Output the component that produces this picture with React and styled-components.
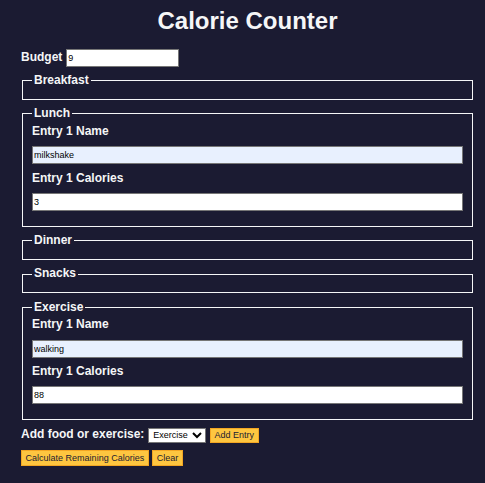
import styled, { createGlobalStyle } from "styled-components";

const GlobalStyle = createGlobalStyle`
  body {
    margin: 0;
    background-color: #1b1b32;
    color: #f5f6f7;
    font-family: "Liberation Sans", Arial, sans-serif;
  }
`;

const Container = styled.main`
  width: 455px;
  margin-left: 20px;
`;

const Title = styled.h1`
  margin: 7px 0 0;
  font-size: 24px;
  font-weight: bold;
  line-height: 1.15;
  text-align: center;
`;

const Form = styled.form`
  margin-top: 14px;
`;

const Label = styled.label`
  font-size: 12px;
  font-weight: bold;
  line-height: 1.15;
`;

const BudgetRow = styled.div`
  display: flex;
  align-items: center;
  gap: 4px;
  padding-left: 1px;
`;

const TextInput = styled.input`
  box-sizing: border-box;
  height: 18px;
  padding: 0 1px;
  border: 1px solid #767676;
  border-radius: 0;
  background: ${({ $autofill }) => ($autofill ? "#e8f0fe" : "#fff")};
  color: #000;
  font-family: "Liberation Sans", Arial, sans-serif;
  font-size: 9px;
  width: ${({ $width }) => $width || "100%"};
  margin: ${({ $spaced }) => ($spaced ? "7.5px 0" : "0")};
`;

const Fieldset = styled.fieldset`
  margin: 7.2px 2px 0;
  padding: 4px 9px 7.3px;
  border: 1px solid #f5f6f7;
`;

const Legend = styled.legend`
  padding: 0 2px;
  font-size: 12px;
  font-weight: bold;
  line-height: 1.15;
`;

const InputContainer = styled.div`
  display: flex;
  flex-direction: column;
`;

const AddRow = styled.div`
  display: flex;
  align-items: center;
  margin-top: 7.5px;
  padding-left: 1px;
`;

const Select = styled.select`
  box-sizing: border-box;
  width: 58px;
  height: 15px;
  margin-left: 4px;
  padding: 0;
  border: 1px solid #767676;
  border-radius: 0;
  background: #fff;
  color: #000;
  font-family: "Liberation Sans", Arial, sans-serif;
  font-size: 9px;
`;

const Button = styled.button`
  box-sizing: border-box;
  height: ${({ $tall }) => ($tall ? "15.7px" : "15.3px")};
  margin-left: ${({ $first }) => ($first ? "0" : "3.5px")};
  padding: 0 3.6px;
  border: 1px solid #f3a623;
  border-radius: 0;
  background-color: #fec640;
  color: #1b1b32;
  font-family: "Liberation Sans", Arial, sans-serif;
  font-size: 9px;
  cursor: pointer;
`;

const ButtonRow = styled.div`
  display: flex;
  margin-top: 7.5px;
  padding-left: 1px;
`;

function Entry({ section, name, calories }) {
  return (
    <InputContainer>
      <Label htmlFor={`${section}-1-name`}>Entry 1 Name</Label>
      <TextInput id={`${section}-1-name`} defaultValue={name} $autofill $spaced />
      <Label htmlFor={`${section}-1-calories`}>Entry 1 Calories</Label>
      <TextInput id={`${section}-1-calories`} defaultValue={calories} $spaced />
    </InputContainer>
  );
}

export default function App() {
  return (
    <>
      <GlobalStyle />
      <Container>
        <Title>Calorie Counter</Title>
        <Form>
          <BudgetRow>
            <Label htmlFor="budget">Budget</Label>
            <TextInput id="budget" defaultValue="9" $width="113px" />
          </BudgetRow>

          <Fieldset>
            <Legend>Breakfast</Legend>
          </Fieldset>
          <Fieldset>
            <Legend>Lunch</Legend>
            <Entry section="lunch" name="milkshake" calories="3" />
          </Fieldset>
          <Fieldset>
            <Legend>Dinner</Legend>
          </Fieldset>
          <Fieldset>
            <Legend>Snacks</Legend>
          </Fieldset>
          <Fieldset>
            <Legend>Exercise</Legend>
            <Entry section="exercise" name="walking" calories="88" />
          </Fieldset>

          <AddRow>
            <Label htmlFor="entry-dropdown">Add food or exercise:</Label>
            <Select id="entry-dropdown" defaultValue="exercise">
              <option value="breakfast">Breakfast</option>
              <option value="lunch">Lunch</option>
              <option value="dinner">Dinner</option>
              <option value="snacks">Snacks</option>
              <option value="exercise">Exercise</option>
            </Select>
            <Button type="button">Add Entry</Button>
          </AddRow>

          <ButtonRow>
            <Button type="submit" $first $tall>
              Calculate Remaining Calories
            </Button>
            <Button type="button" $tall>
              Clear
            </Button>
          </ButtonRow>
        </Form>
      </Container>
    </>
  );
}
